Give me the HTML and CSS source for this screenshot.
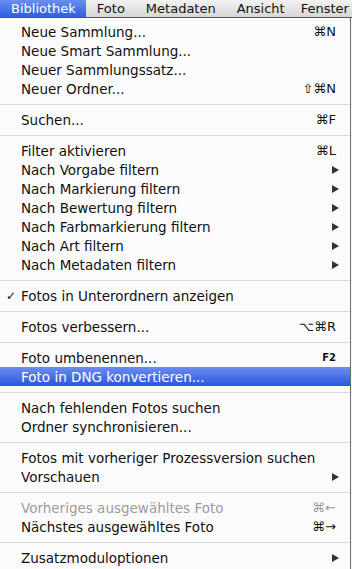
FILE: index.html
```html
<!DOCTYPE html>
<html>
<head>
<meta charset="utf-8">
<link rel="stylesheet" href="styles.css">
</head>
<body>
<div class="menubar">
  <div class="mb-item active">Bibliothek</div>
  <div class="mb-item">Foto</div>
  <div class="mb-item">Metadaten</div>
  <div class="mb-item">Ansicht</div>
  <div class="mb-item">Fenster</div>
</div>
<div class="menu">
  <div class="row"><span class="label">Neue Sammlung...</span><span class="key">⌘N</span></div>
  <div class="row"><span class="label">Neue Smart Sammlung...</span></div>
  <div class="row"><span class="label">Neuer Sammlungssatz...</span></div>
  <div class="row"><span class="label">Neuer Ordner...</span><span class="key">⇧⌘N</span></div>
  <div class="sep"></div>
  <div class="row"><span class="label">Suchen...</span><span class="key">⌘F</span></div>
  <div class="sep"></div>
  <div class="row"><span class="label">Filter aktivieren</span><span class="key">⌘L</span></div>
  <div class="row"><span class="label">Nach Vorgabe filtern</span><span class="arrow"></span></div>
  <div class="row"><span class="label">Nach Markierung filtern</span><span class="arrow"></span></div>
  <div class="row"><span class="label">Nach Bewertung filtern</span><span class="arrow"></span></div>
  <div class="row"><span class="label">Nach Farbmarkierung filtern</span><span class="arrow"></span></div>
  <div class="row"><span class="label">Nach Art filtern</span><span class="arrow"></span></div>
  <div class="row"><span class="label">Nach Metadaten filtern</span><span class="arrow"></span></div>
  <div class="sep"></div>
  <div class="row"><span class="check">✓</span><span class="label">Fotos in Unterordnern anzeigen</span></div>
  <div class="sep"></div>
  <div class="row"><span class="label">Fotos verbessern...</span><span class="key">⌥⌘R</span></div>
  <div class="sep"></div>
  <div class="row"><span class="label">Foto umbenennen...</span><span class="key fkey">F2</span></div>
  <div class="row selected"><span class="label">Foto in DNG konvertieren...</span></div>
  <div class="sep"></div>
  <div class="row"><span class="label">Nach fehlenden Fotos suchen</span></div>
  <div class="row"><span class="label">Ordner synchronisieren...</span></div>
  <div class="sep"></div>
  <div class="row"><span class="label">Fotos mit vorheriger Prozessversion suchen</span></div>
  <div class="row"><span class="label">Vorschauen</span><span class="arrow"></span></div>
  <div class="sep"></div>
  <div class="row disabled"><span class="label">Vorheriges ausgewähltes Foto</span><span class="key">⌘←</span></div>
  <div class="row"><span class="label">Nächstes ausgewähltes Foto</span><span class="key">⌘→</span></div>
  <div class="sep"></div>
  <div class="row"><span class="label">Zusatzmoduloptionen</span><span class="arrow"></span></div>
</div>
</body>
</html>
```
FILE: styles.css
```css
html, body {
  margin: 0;
  padding: 0;
  background: #f7f7f7;
}
body {
  font-family: "DejaVu Sans", "Liberation Sans", sans-serif;
  font-size: 13.5px;
  color: #111;
  width: 352px;
  height: 569px;
  overflow: hidden;
}
.menubar {
  display: flex;
  height: 17px;
  font-size: 13px;
  background: linear-gradient(#f2f2f2, #d6d6d6);
  border-bottom: 1px solid #555;
  white-space: nowrap;
}
.mb-item {
  padding: 0 10px 0 11px;
  line-height: 17px;
  color: #111;
}
.mb-item:last-child {
  padding: 0 0 0 6px;
}
.mb-item.active {
  background: linear-gradient(#6a8ef2, #2f5fe0);
  color: #fff;
}
.menu {
  background: #fbfbfb;
  border-right: 1px solid #6a6a6a;
  width: 350px;
  padding-top: 4px;
  height: 560px;
}
.row {
  display: flex;
  align-items: center;
  height: 19px;
  padding: 0 14px 0 21px;
  position: relative;
  white-space: nowrap;
}
.label {
  flex: 1;
}
.key {
  font-size: 13px;
}
.fkey {
  font-size: 10px;
  font-weight: bold;
}
.check {
  position: absolute;
  left: 6px;
  font-size: 12px;
}
.arrow {
  width: 0;
  height: 0;
  border-top: 4.5px solid transparent;
  border-bottom: 4.5px solid transparent;
  border-left: 7px solid #333;
  margin-right: -3px;
}
.selected {
  background: linear-gradient(#6b8cf0, #2a57dc);
  color: #fff;
}
.disabled {
  color: #9c9c9c;
}
.sep {
  height: 12px;
  display: flex;
  align-items: center;
}
.sep::before {
  content: "";
  flex: 1;
  height: 1px;
  background: #d8d8d8;
}
```
